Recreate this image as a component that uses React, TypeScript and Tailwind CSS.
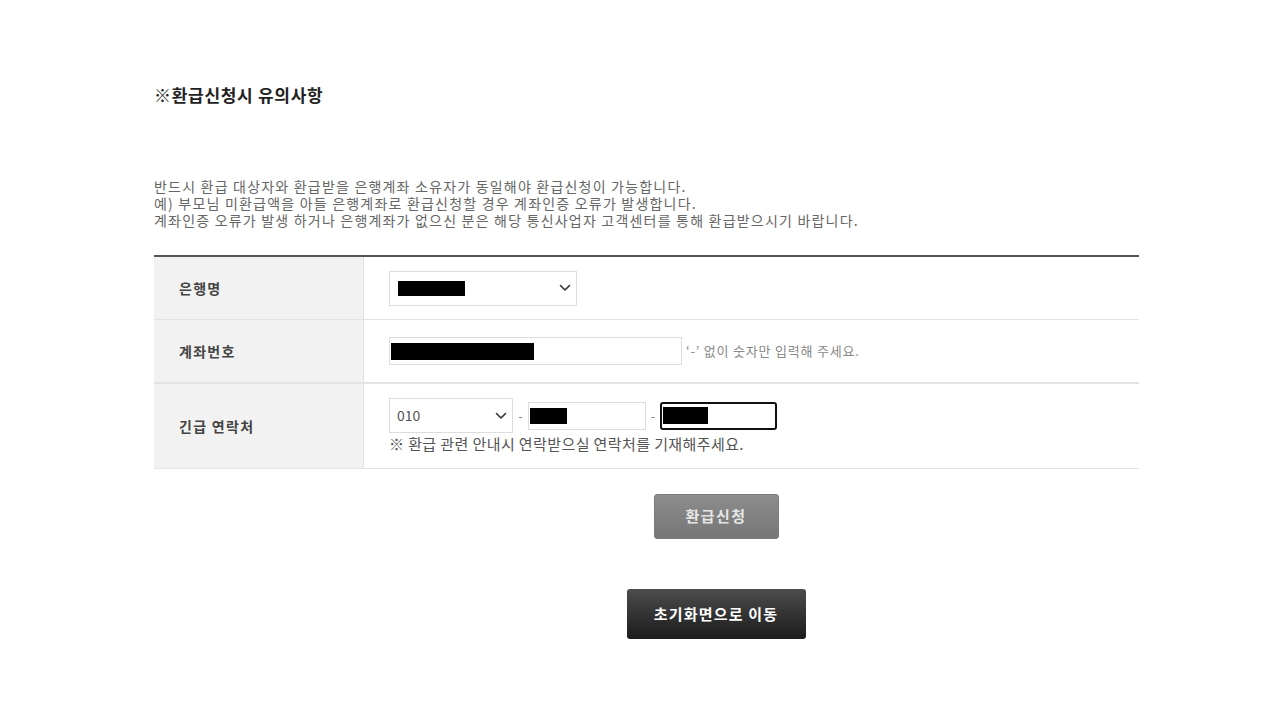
import React from 'react';

const font = { fontFamily: '"Noto Sans CJK KR", "Noto Sans", sans-serif' };

function Chevron() {
    return (
        <svg width="12" height="8" viewBox="0 0 12 8" className="shrink-0">
            <path d="M1.5 1.5l4.5 4.5 4.5-4.5" fill="none" stroke="#333" strokeWidth="1.6" strokeLinecap="round" strokeLinejoin="round" />
        </svg>
    );
}

function Redact({ w, h = 'h-4' }: { w: string; h?: string }) {
    return <span className={`block bg-black ${w} ${h}`} />;
}

export default function App() {
    return (
        <div className="min-h-[720px] bg-white text-[#333]" style={font}>
            <div className="ml-[154px] w-[985px] pt-[83px]">
                <h2 className="text-[17px] font-bold leading-[24px] tracking-[0.7px] text-[#222]">※환급신청시 유의사항</h2>

                <div className="mt-[71px] text-[14px] leading-[17px] tracking-[1.2px] text-[#666]">
                    <p>반드시 환급 대상자와 환급받을 은행계좌 소유자가 동일해야 환급신청이 가능합니다.</p>
                    <p>예) 부모님 미환급액을 아들 은행계좌로 환급신청할 경우 계좌인증 오류가 발생합니다.</p>
                    <p>계좌인증 오류가 발생 하거나 은행계좌가 없으신 분은 해당 통신사업자 고객센터를 통해 환급받으시기 바랍니다.</p>
                </div>

                <div className="mt-[26px] border-t-2 border-[#555]">
                    <div className="flex h-[63px] border-b border-[#e3e3e3]">
                        <div className="flex w-[210px] items-center border-r border-[#e3e3e3] bg-[#f2f2f2] pl-[25px] text-[14px] font-bold tracking-[1.3px] text-[#444]">은행명</div>
                        <div className="flex flex-1 items-center pl-[25px]">
                            <div className="flex h-[35px] w-[188px] items-center justify-between border border-[#ddd] pl-[8px] pr-[5px]">
                                <Redact w="w-[67px]" h="h-[15px]" />
                                <Chevron />
                            </div>
                        </div>
                    </div>

                    <div className="flex h-[64px] border-b-2 border-[#e3e3e3]">
                        <div className="flex w-[210px] items-center border-r border-[#e3e3e3] bg-[#f2f2f2] pl-[25px] text-[14px] font-bold tracking-[1.3px] text-[#444]">계좌번호</div>
                        <div className="flex flex-1 items-center gap-[4px] pl-[25px]">
                            <div className="flex h-[28px] w-[293px] items-center border border-[#ddd] pl-[1px]">
                                <Redact w="w-[143px]" h="h-[17px]" />
                            </div>
                            <span className="text-[13px] tracking-[0.8px] text-[#888]">‘-’ 없이 숫자만 입력해 주세요.</span>
                        </div>
                    </div>

                    <div className="flex h-[85px] border-b border-[#e3e3e3]">
                        <div className="flex w-[210px] items-center border-r border-[#e3e3e3] bg-[#f2f2f2] pl-[25px] text-[14px] font-bold tracking-[1.3px] text-[#444]">긴급 연락처</div>
                        <div className="flex flex-1 flex-col justify-center pl-[25px]">
                            <div className="flex items-center">
                                <div className="flex h-[35px] w-[124px] items-center justify-between border border-[#ddd] pl-[7px] pr-[5px] text-[14px] text-[#555]">
                                    <span>010</span>
                                    <Chevron />
                                </div>
                                <span className="w-[15px] text-center text-[13px] text-[#888]">-</span>
                                <div className="flex h-[28px] w-[118px] items-center border border-[#ddd] pl-[1px]">
                                    <Redact w="w-[37px]" />
                                </div>
                                <span className="w-[14px] text-center text-[13px] text-[#888]">-</span>
                                <div className="flex h-[28px] w-[117px] items-center rounded-[3px] border-2 border-[#111] pl-[1px]">
                                    <Redact w="w-[45px]" h="h-[17px]" />
                                </div>
                            </div>
                            <p className="mt-[1px] text-[15px] leading-[20px] tracking-[0.4px] text-[#555]">※ 환급 관련 안내시 연락받으실 연락처를 기재해주세요.</p>
                        </div>
                    </div>
                </div>
            </div>

            <div className="ml-[154px] flex w-[1124px] flex-col items-center">
                <button className="mt-[25px] h-[45px] w-[125px] rounded-[3px] border border-[#7a7a7a] bg-gradient-to-b from-[#8d8d8d] to-[#767676] text-[15px] font-bold tracking-[1.5px] text-[#e6e6e6]">
                    환급신청
                </button>
                <button className="mt-[50px] h-[50px] w-[179px] rounded-[3px] bg-gradient-to-b from-[#4d4d4d] to-[#1c1c1c] text-[15px] font-bold tracking-[1.2px] text-white">
                    초기화면으로 이동
                </button>
            </div>
        </div>
    );
}
